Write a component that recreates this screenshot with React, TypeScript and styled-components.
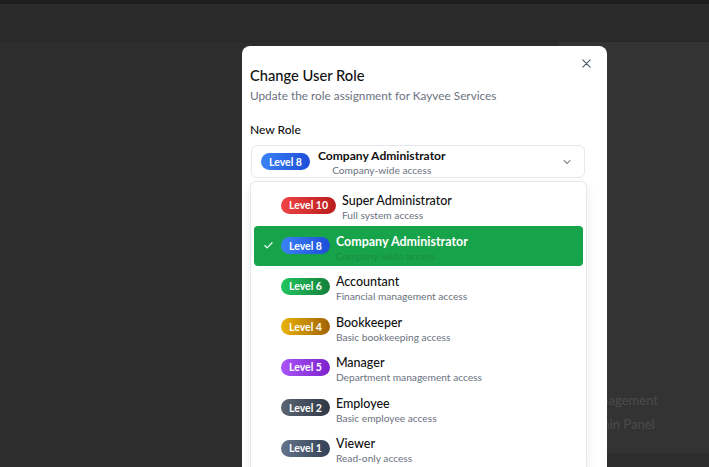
import React from "react";
import styled, { createGlobalStyle } from "styled-components";

const GlobalStyle = createGlobalStyle`
  html, body { margin: 0; padding: 0; }
  body {
    background: #2d2d2d;
    font-family: Lato, "Noto Sans", Arial, sans-serif;
    overflow: hidden;
  }
  * { box-sizing: border-box; }
`;

const Page = styled.div`
  width: 709px;
  height: 467px;
  display: flex;
  flex-direction: column;
  position: relative;
  overflow: hidden;
`;

const TopStrip = styled.div`
  height: 4px;
  background: #1f1f1f;
`;

const Header = styled.div`
  height: 38px;
  background: #2b2b2b;
  border-bottom: 1px solid #282828;
`;

const Body = styled.div`
  flex: 1;
  display: flex;
  justify-content: flex-end;
  padding-bottom: 14px;
`;

const SidePanel = styled.div`
  width: 150px;
  background: #333333;
  display: flex;
  flex-direction: column;
  justify-content: flex-end;
  gap: 6px;
  padding: 0 0 20px 24px;
`;

const SideItem = styled.div`
  font-size: 13px;
  line-height: 18px;
  color: #4b4b4b;
`;

const Overlay = styled.div`
  position: absolute;
  inset: 0;
  padding: 46px 0 0 242px;
`;

const Modal = styled.div`
  position: relative;
  width: 365px;
  height: 460px;
  background: #ffffff;
  border-radius: 8px 8px 0 0;
  padding: 17px 22px 0 8px;
  display: flex;
  flex-direction: column;
`;

const CloseButton = styled.button`
  position: absolute;
  top: 11px;
  right: 15px;
  width: 12px;
  height: 12px;
  padding: 0;
  border: none;
  background: transparent;
  color: #4b5563;
  display: flex;
  align-items: center;
  justify-content: center;
`;

const Title = styled.h2`
  margin: 0;
  font-size: 14.7px;
  line-height: 24px;
  font-weight: 500;
  color: #111111;
`;

const Subtitle = styled.p`
  margin: 0;
  font-size: 11.8px;
  line-height: 18px;
  color: #6b7280;
`;

const Label = styled.div`
  margin-top: 16px;
  font-size: 12px;
  line-height: 18px;
  font-weight: 500;
  color: #111111;
`;

const SelectWrap = styled.div`
  position: relative;
  margin-top: 6px;
  margin-left: 1px;
`;

const Trigger = styled.div`
  height: 33px;
  border: 1px solid #e5e7eb;
  border-radius: 6px;
  display: flex;
  align-items: center;
  padding: 0 11px 0 9px;
`;

const TriggerBody = styled.div`
  flex: 1;
  display: flex;
  align-items: center;
  gap: 8px;
`;

const TriggerText = styled.div`
  display: flex;
  flex-direction: column;
  align-items: center;
`;

const TriggerTitle = styled.div`
  font-size: 12.1px;
  line-height: 16px;
  font-weight: 700;
  color: #111111;
`;

const TriggerDesc = styled.div`
  font-size: 10.2px;
  line-height: 12px;
  color: #6b7280;
`;

const Chevron = styled.span`
  color: #8b919b;
  display: flex;
`;

const List = styled.div`
  position: absolute;
  top: 36px;
  left: -1px;
  right: -2px;
  background: #ffffff;
  border: 1px solid #e5e7eb;
  border-radius: 6px;
  padding: 3px;
  box-shadow: 0 4px 12px rgba(0, 0, 0, 0.08);
`;

const Item = styled.div<{ $selected?: boolean }>`
  height: 40.5px;
  display: flex;
  align-items: center;
  border-radius: 4px;
  background: ${(p) => (p.$selected ? "#16a34a" : "transparent")};
`;

const CheckSlot = styled.span`
  width: 27px;
  display: flex;
  justify-content: center;
  padding-left: 1px;
  color: #ffffff;
`;

const ItemText = styled.div`
  align-self: flex-start;
  display: flex;
  flex-direction: column;
  margin-left: 6px;
  padding-top: 8px;
`;

const ItemTitle = styled.div<{ $selected?: boolean }>`
  font-size: 12.5px;
  line-height: 16px;
  font-weight: ${(p) => (p.$selected ? 700 : 500)};
  color: ${(p) => (p.$selected ? "#ffffff" : "#111111")};
`;

const ItemDesc = styled.div<{ $selected?: boolean }>`
  font-size: 10.2px;
  line-height: 13px;
  color: ${(p) => (p.$selected ? "#1d8c41" : "#6b7280")};
`;

const Badge = styled.span<{ $from: string; $to: string }>`
  display: inline-flex;
  align-items: center;
  justify-content: center;
  height: 17px;
  padding: 0 8px;
  border-radius: 999px;
  font-size: 10.5px;
  font-weight: 700;
  color: #ffffff;
  white-space: nowrap;
  background: linear-gradient(90deg, ${(p) => p.$from}, ${(p) => p.$to});
`;

type Role = {
  level: number;
  name: string;
  desc: string;
  from: string;
  to: string;
};

const roles: Role[] = [
  { level: 10, name: "Super Administrator", desc: "Full system access", from: "#ef4444", to: "#b91c1c" },
  { level: 8, name: "Company Administrator", desc: "Company-wide access", from: "#3b82f6", to: "#1d4ed8" },
  { level: 6, name: "Accountant", desc: "Financial management access", from: "#22c55e", to: "#15803d" },
  { level: 4, name: "Bookkeeper", desc: "Basic bookkeeping access", from: "#eab308", to: "#a16207" },
  { level: 5, name: "Manager", desc: "Department management access", from: "#a855f7", to: "#7e22ce" },
  { level: 2, name: "Employee", desc: "Basic employee access", from: "#5b6472", to: "#2f3845" },
  { level: 1, name: "Viewer", desc: "Read-only access", from: "#64748b", to: "#334155" },
];

const selectedLevel = 8;

export default function App() {
  const current = roles.find((r) => r.level === selectedLevel)!;
  return (
    <>
      <GlobalStyle />
      <Page>
        <TopStrip />
        <Header />
        <Body>
          <SidePanel>
            <SideItem>Management</SideItem>
            <SideItem>Admin Panel</SideItem>
          </SidePanel>
        </Body>
        <Overlay>
          <Modal>
            <CloseButton aria-label="Close">
              <svg width="11" height="11" viewBox="0 0 24 24" fill="none" stroke="currentColor" strokeWidth="2.4" strokeLinecap="round">
                <path d="M4 4l16 16M20 4L4 20" />
              </svg>
            </CloseButton>
            <Title>Change User Role</Title>
            <Subtitle>Update the role assignment for Kayvee Services</Subtitle>
            <Label>New Role</Label>
            <SelectWrap>
              <Trigger>
                <TriggerBody>
                  <Badge $from={current.from} $to={current.to}>Level {current.level}</Badge>
                  <TriggerText>
                    <TriggerTitle>{current.name}</TriggerTitle>
                    <TriggerDesc>{current.desc}</TriggerDesc>
                  </TriggerText>
                </TriggerBody>
                <Chevron>
                  <svg width="12" height="12" viewBox="0 0 24 24" fill="none" stroke="currentColor" strokeWidth="2.2" strokeLinecap="round" strokeLinejoin="round">
                    <path d="M6 9l6 6 6-6" />
                  </svg>
                </Chevron>
              </Trigger>
              <List>
                {roles.map((r) => {
                  const sel = r.level === selectedLevel;
                  return (
                    <Item key={r.level} $selected={sel}>
                      <CheckSlot>
                        {sel && (
                          <svg width="11" height="11" viewBox="0 0 24 24" fill="none" stroke="currentColor" strokeWidth="2.4" strokeLinecap="round" strokeLinejoin="round">
                            <path d="M20 6L9 17l-5-5" />
                          </svg>
                        )}
                      </CheckSlot>
                      <Badge $from={r.from} $to={r.to}>Level {r.level}</Badge>
                      <ItemText>
                        <ItemTitle $selected={sel}>{r.name}</ItemTitle>
                        <ItemDesc $selected={sel}>{r.desc}</ItemDesc>
                      </ItemText>
                    </Item>
                  );
                })}
              </List>
            </SelectWrap>
          </Modal>
        </Overlay>
      </Page>
    </>
  );
}
